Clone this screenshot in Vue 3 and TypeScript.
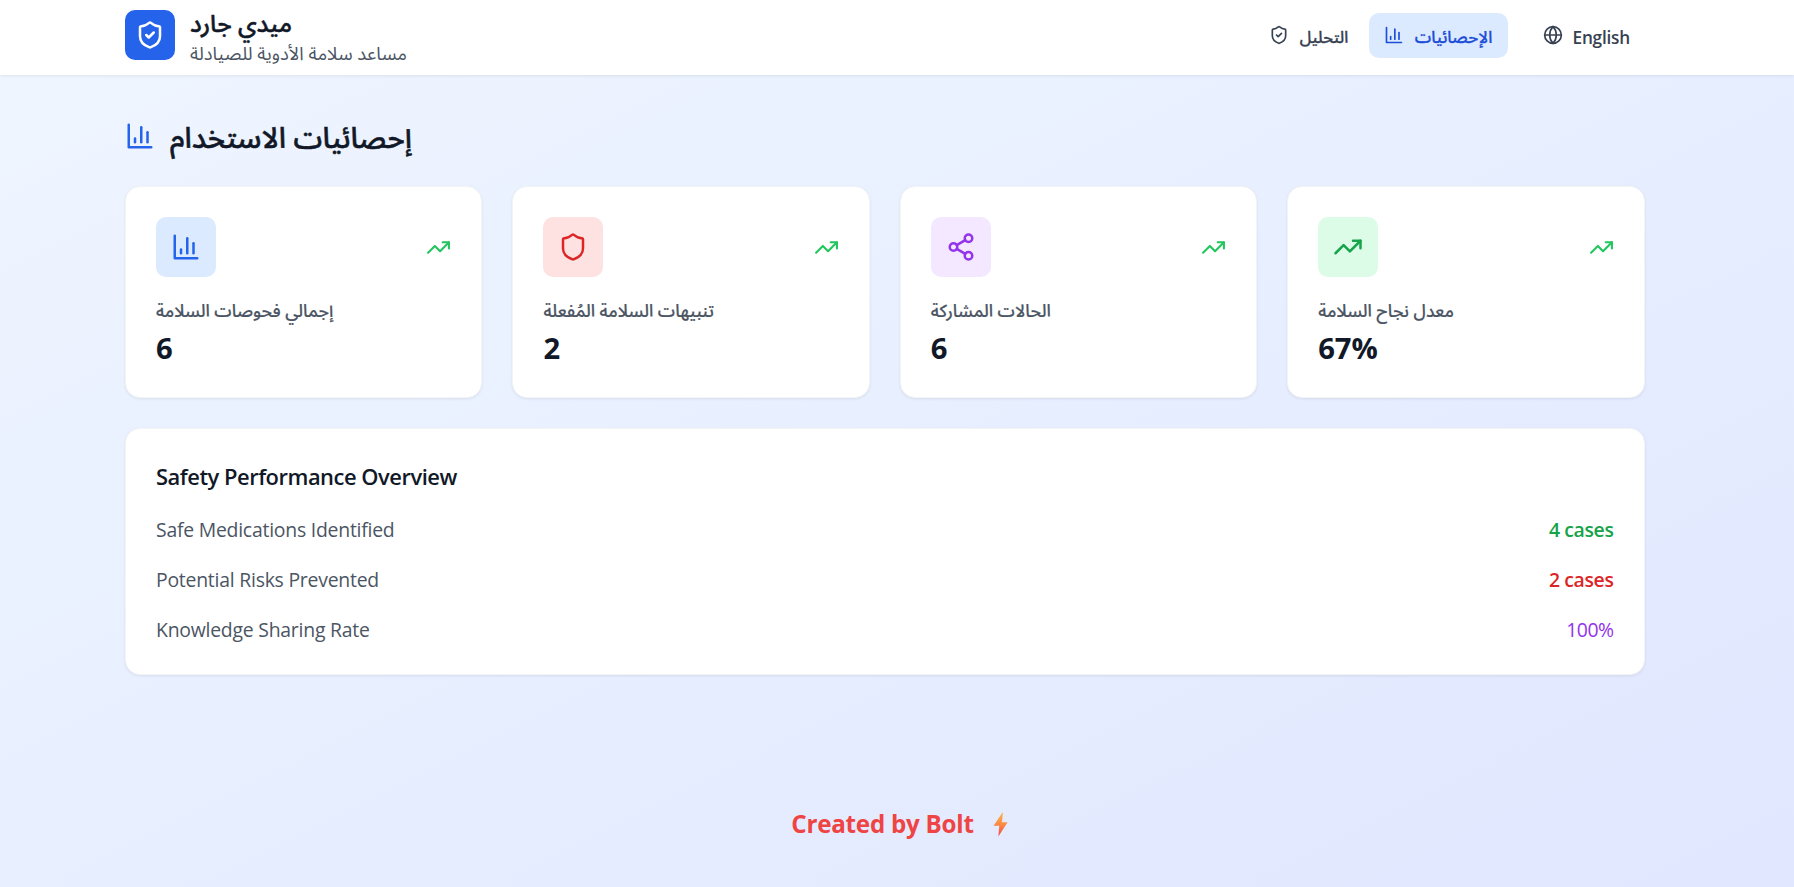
<script setup lang="ts">
type IconName = 'shield' | 'shieldCheck' | 'chart' | 'share' | 'trend' | 'globe';

interface Stat {
    label: string;
    value: string;
    icon: IconName;
    tone: string;
}

const shieldOutline =
    'M20 13c0 5-3.5 7.5-7.66 8.95a1 1 0 0 1-.67-.01C7.5 20.5 4 18 4 13V6a1 1 0 0 1 1-1c2 0 4.5-1.2 6.24-2.72a1.17 1.17 0 0 1 1.52 0C14.51 3.81 17 5 19 5a1 1 0 0 1 1 1z';

const icons: Record<IconName, string[]> = {
    shield: [shieldOutline],
    shieldCheck: [shieldOutline, 'm9 12 2 2 4-4'],
    chart: ['M3 3v18h18', 'M18 17V9', 'M13 17V5', 'M8 17v-3'],
    share: [
        'M21 5a3 3 0 1 1-6 0 3 3 0 0 1 6 0z',
        'M9 12a3 3 0 1 1-6 0 3 3 0 0 1 6 0z',
        'M21 19a3 3 0 1 1-6 0 3 3 0 0 1 6 0z',
        'M8.59 13.51l6.83 3.98',
        'M15.41 6.51l-6.82 3.98',
    ],
    trend: ['M22 7l-8.5 8.5-5-5L2 17', 'M16 7h6v6'],
    globe: [
        'M22 12a10 10 0 1 1-20 0 10 10 0 0 1 20 0z',
        'M12 2a14.5 14.5 0 0 0 0 20 14.5 14.5 0 0 0 0-20',
        'M2 12h20',
    ],
};

const stats: Stat[] = [
    { label: 'إجمالي فحوصات السلامة', value: '6', icon: 'chart', tone: 'blue' },
    { label: 'تنبيهات السلامة المُفعلة', value: '2', icon: 'shield', tone: 'red' },
    { label: 'الحالات المشاركة', value: '6', icon: 'share', tone: 'purple' },
    { label: 'معدل نجاح السلامة', value: '67%', icon: 'trend', tone: 'green' },
];

const overview = [
    { label: 'Safe Medications Identified', value: '4 cases', tone: 'green' },
    { label: 'Potential Risks Prevented', value: '2 cases', tone: 'red' },
    { label: 'Knowledge Sharing Rate', value: '100%', tone: 'purple' },
];
</script>

<template>
    <div class="page">
        <header class="header">
            <div class="container header-row">
                <div class="brand">
                    <div class="logo">
                        <svg class="icon icon-lg" viewBox="0 0 24 24">
                            <path v-for="d in icons.shieldCheck" :key="d" :d="d" />
                        </svg>
                    </div>
                    <div class="brand-text">
                        <h1 class="brand-name">ميدي جارد</h1>
                        <p class="brand-tagline">مساعد سلامة الأدوية للصيادلة</p>
                    </div>
                </div>

                <nav class="nav">
                    <button class="nav-item">
                        <svg class="icon icon-sm" viewBox="0 0 24 24">
                            <path v-for="d in icons.shieldCheck" :key="d" :d="d" />
                        </svg>
                        <span class="analysis">التحليل</span>
                    </button>
                    <button class="nav-item active">
                        <svg class="icon icon-sm" viewBox="0 0 24 24">
                            <path v-for="d in icons.chart" :key="d" :d="d" />
                        </svg>
                        <span class="statistics">الإحصائيات</span>
                    </button>
                    <button class="nav-item language">
                        <svg class="icon icon-sm" viewBox="0 0 24 24">
                            <path v-for="d in icons.globe" :key="d" :d="d" />
                        </svg>
                        <span class="latin">English</span>
                    </button>
                </nav>
            </div>
        </header>

        <main class="container main">
            <div class="title-row">
                <svg class="icon icon-lg" viewBox="0 0 24 24">
                    <path v-for="d in icons.chart" :key="d" :d="d" />
                </svg>
                <h2 class="title">إحصائيات الاستخدام</h2>
            </div>

            <section class="stats">
                <article v-for="stat in stats" :key="stat.label" class="card">
                    <div class="card-head">
                        <div class="tile" :class="stat.tone">
                            <svg class="icon icon-lg" viewBox="0 0 24 24">
                                <path v-for="d in icons[stat.icon]" :key="d" :d="d" />
                            </svg>
                        </div>
                        <svg class="icon icon-md trend" viewBox="0 0 24 24">
                            <path v-for="d in icons.trend" :key="d" :d="d" />
                        </svg>
                    </div>
                    <h3 class="card-label">{{ stat.label }}</h3>
                    <p class="card-value">{{ stat.value }}</p>
                </article>
            </section>

            <section class="card overview">
                <h3 class="overview-title">Safety Performance Overview</h3>
                <div class="overview-rows">
                    <div v-for="row in overview" :key="row.label" class="overview-row">
                        <span>{{ row.label }}</span>
                        <span class="overview-value" :class="row.tone">{{ row.value }}</span>
                    </div>
                </div>
            </section>
        </main>

        <footer class="footer">
            <span class="credit">Created by Bolt</span>
            <svg class="bolt" viewBox="0 0 15 25">
                <defs>
                    <linearGradient id="bolt-fill" x1="0" y1="0" x2="0" y2="1">
                        <stop offset="0" stop-color="#fdb446" />
                        <stop offset="0.5" stop-color="#fb8a45" />
                        <stop offset="1" stop-color="#f04a4a" />
                    </linearGradient>
                </defs>
                <path d="M9.4 0.5 L0.6 13.8 H6.2 L5.4 24.5 L14.6 10.2 H9 L9.9 0.6 Z" />
            </svg>
        </footer>
    </div>
</template>

<style>
body {
    margin: 0;
}
</style>

<style scoped>
.page {
    box-sizing: border-box;
    height: 887px;
    overflow: hidden;
    color: #111827;
    font-family: 'Open Sans', 'Noto Sans Arabic', 'DejaVu Sans', sans-serif;
    background: linear-gradient(to bottom right, #eff6ff, #e0e7ff);
}

h1,
h2,
h3,
p {
    margin: 0;
}

.container {
    box-sizing: border-box;
    width: 1519.5px;
    margin-left: 125px;
}

.icon {
    flex: none;
    fill: none;
    stroke: currentColor;
    stroke-width: 2;
    stroke-linecap: round;
    stroke-linejoin: round;
}

.icon-sm {
    width: 20px;
    height: 20px;
}

.icon-md {
    width: 25px;
    height: 25px;
}

.icon-lg {
    width: 30px;
    height: 30px;
}

.header {
    box-sizing: border-box;
    height: 75px;
    background: #fff;
    box-shadow: 0 1px 3px rgba(0, 0, 0, 0.08);
}

.header-row {
    display: flex;
    align-items: flex-start;
    justify-content: space-between;
}

.brand {
    display: flex;
    gap: 15px;
    padding-top: 10px;
}

.logo {
    display: grid;
    place-items: center;
    width: 50px;
    height: 50px;
    border-radius: 10px;
    color: #fff;
    background: #2563eb;
}

.brand-name {
    height: 30px;
    font-size: 24px;
    font-weight: 500;
    line-height: 26px;
    white-space: nowrap;
    -webkit-text-stroke: 0.5px currentColor;
}

.brand-tagline {
    height: 25px;
    color: #4b5563;
    font-size: 18.4px;
    line-height: 25px;
    white-space: nowrap;
}

.nav {
    display: flex;
    gap: 5px;
    padding-top: 13px;
}

.nav-item {
    display: flex;
    gap: 10px;
    box-sizing: border-box;
    height: 45px;
    padding: 12px 15px 0;
    border: 0;
    border-radius: 10px;
    color: #374151;
    background: none;
    font: inherit;
    font-size: 16.6px;
    font-weight: 500;
    line-height: 24px;
    white-space: nowrap;
}

.nav-item.active {
    color: #1d4ed8;
    background: #dbeafe;
}

.analysis,
.statistics {
    padding-left: 1px;
    -webkit-text-stroke: 0.3px currentColor;
}

.analysis {
    width: 49px;
    font-size: 16.2px;
}

.statistics {
    width: 78px;
}

.language {
    margin-left: 15px;
}

.latin {
    width: 57px;
    font-size: 17.2px;
    font-weight: 550;
    letter-spacing: -0.2px;
    line-height: 25px;
}

.main {
    padding-top: 46px;
}

.title-row {
    display: flex;
    gap: 15px;
    height: 65px;
}

.title-row .icon {
    color: #2563eb;
}

.title {
    height: 37px;
    font-size: 29px;
    font-weight: 500;
    line-height: 31px;
    white-space: nowrap;
    -webkit-text-stroke: 0.5px currentColor;
}

.stats {
    display: grid;
    grid-template-columns: repeat(4, 1fr);
    gap: 30px;
}

.card {
    box-sizing: border-box;
    padding: 30px;
    border: 1px solid #f3f4f6;
    border-radius: 15px;
    background: #fff;
    box-shadow: 0 1px 3px rgba(0, 0, 0, 0.08);
}

.stats .card {
    height: 212px;
}

.card-head {
    display: flex;
    align-items: center;
    justify-content: space-between;
}

.tile {
    display: grid;
    place-items: center;
    width: 60px;
    height: 60px;
    border-radius: 10px;
}

.tile.blue {
    color: #2563eb;
    background: #dbeafe;
}

.tile.red {
    color: #dc2626;
    background: #fee2e2;
}

.tile.purple {
    color: #9333ea;
    background: #f3e8ff;
}

.tile.green {
    color: #16a34a;
    background: #dcfce7;
}

.trend {
    color: #22c55e;
}

.card-label {
    height: 25px;
    margin-top: 21px;
    color: #4b5563;
    font-size: 17.4px;
    font-weight: 500;
    line-height: 25px;
    white-space: nowrap;
    -webkit-text-stroke: 0.2px currentColor;
}

.card-value {
    height: 40px;
    margin-top: 5px;
    font-size: 29.2px;
    font-weight: 700;
    line-height: 40px;
}

.overview {
    height: 247px;
    margin-top: 30px;
}

.overview-title {
    height: 35px;
    font-size: 21.9px;
    font-weight: 600;
    letter-spacing: -0.47px;
    line-height: 35px;
}

.overview-rows {
    display: grid;
    gap: 20px;
    margin-top: 21px;
}

.overview-row {
    display: flex;
    justify-content: space-between;
    height: 30px;
    color: #4b5563;
    font-size: 19.4px;
    letter-spacing: -0.23px;
    line-height: 30px;
}

.overview-value {
    font-weight: 600;
    letter-spacing: -0.35px;
}

.overview-value.green {
    color: #16a34a;
}

.overview-value.red {
    color: #dc2626;
}

.overview-value.purple {
    color: #9333ea;
    font-weight: 500;
    letter-spacing: -0.5px;
}

.footer {
    display: flex;
    align-items: center;
    justify-content: center;
    gap: 19px;
    height: 36px;
    margin-top: 131px;
    padding-left: 5px;
    color: #ef4444;
}

.credit {
    font-size: 24.2px;
    font-weight: 700;
    letter-spacing: -0.25px;
    line-height: 36px;
}

.bolt {
    width: 15px;
    height: 25px;
    fill: url(#bolt-fill);
}
</style>
